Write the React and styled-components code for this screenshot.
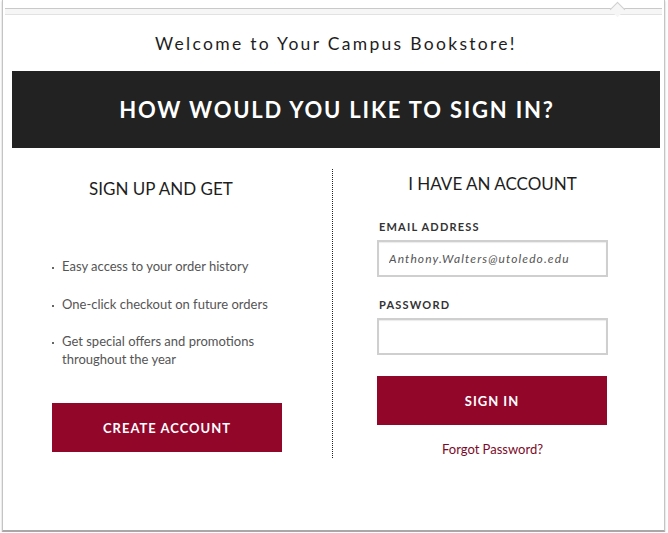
import React from 'react';
import styled, { createGlobalStyle } from 'styled-components';

const GlobalStyle = createGlobalStyle`
  html, body {
    margin: 0;
    padding: 0;
    background: #ffffff;
  }
  body {
    font-family: Lato, "Open Sans", Arial, sans-serif;
    color: #222;
  }
`;

const Frame = styled.div`
  position: relative;
  width: 661px;
  height: 522px;
  margin: 0 0 0 2px;
  border-left: 1px solid #c4c4c4;
  border-right: 1px solid #c4c4c4;
  border-bottom: 2px solid #a8a8a8;
  box-shadow: 0 1px 2px rgba(0, 0, 0, 0.25);
  background: #fff;
  padding-top: 8px;
`;

const TabStrip = styled.div`
  position: relative;
  height: 5px;
  border-top: 1px solid #c9c9c9;
  border-bottom: 1px solid #e2e2e2;
  background: #f6f6f6;
  margin: 0 2px;
`;

const Notch = styled.div`
  position: absolute;
  top: -5px;
  left: 607px;
  width: 10px;
  height: 10px;
  background: #f6f6f6;
  border-top: 1px solid #d0d0d0;
  border-left: 1px solid #d0d0d0;
  transform: rotate(45deg);
`;

const Welcome = styled.h2`
  margin: 18px 0 0;
  padding-left: 5px;
  text-align: center;
  font-size: 17.5px;
  font-weight: 400;
  letter-spacing: 2.3px;
  line-height: 22px;
  color: #1e1e1e;
`;

const Banner = styled.div`
  margin: 16px 4px 0 9px;
  padding-left: 2px;
  height: 77px;
  background: #222222;
  display: flex;
  align-items: center;
  justify-content: center;
  color: #fff;
  font-size: 22px;
  font-weight: 700;
  letter-spacing: 1.8px;
`;

const Columns = styled.div`
  display: grid;
  grid-template-columns: 320px 328px;
  margin: 21px 0 0 9px;
`;

const Column = styled.div`
  display: flex;
  flex-direction: column;
  padding: ${(p) => (p.$right ? '0 52px 0 44px' : '0 50px 6px 40px')};
  border-left: ${(p) => (p.$right ? '1px dotted #222' : 'none')};
`;

const Heading = styled.h3`
  margin: ${(p) => (p.$right ? '4px 0 0' : '9px 0 0')};
  text-align: center;
  font-size: 17px;
  font-weight: 400;
  line-height: 22px;
  color: #1e1e1e;
  transform: ${(p) => (p.$right ? 'none' : 'translateX(-6px)')};
`;

const Benefits = styled.ul`
  list-style: none;
  margin: 57px 0 0;
  padding: 0;
  display: flex;
  flex-direction: column;
  gap: 19.5px;
`;

const Benefit = styled.li`
  position: relative;
  padding-left: 10px;
  font-size: 13px;
  line-height: 18px;
  color: #555;
  &::before {
    content: '';
    position: absolute;
    left: 0;
    top: 10px;
    width: 2px;
    height: 2px;
    background: #666;
  }
`;

const PrimaryButton = styled.button`
  width: 230px;
  height: 49px;
  margin-top: ${(p) => p.$top || '0px'};
  border: none;
  background: #92062a;
  color: #fff;
  font-family: Lato, "Open Sans", Arial, sans-serif;
  font-size: 13px;
  font-weight: 700;
  letter-spacing: 1px;
  cursor: pointer;
`;

const Label = styled.label`
  display: block;
  margin: ${(p) => p.$top} 0 6px 2px;
  font-size: 11px;
  font-weight: 700;
  letter-spacing: 1.2px;
  line-height: 14px;
  color: #333;
`;

const Input = styled.input`
  box-sizing: border-box;
  width: 231px;
  height: 37px;
  padding: 0 10px;
  border: 2px solid #cfcfcf;
  box-shadow: inset 0 1px 1px rgba(0, 0, 0, 0.08);
  font-family: Lato, "Open Sans", Arial, sans-serif;
  font-size: 12px;
  font-style: italic;
  letter-spacing: 1.1px;
  color: #555;
  outline: none;
  &::placeholder {
    color: #555;
  }
`;

const Forgot = styled.a`
  margin-top: 16px;
  text-align: center;
  font-size: 13px;
  color: #7c0a27;
  text-decoration: none;
`;

const benefits = [
  'Easy access to your order history',
  'One-click checkout on future orders',
  'Get special offers and promotions throughout the year',
];

export default function App() {
  return (
    <>
      <GlobalStyle />
      <Frame>
        <TabStrip>
          <Notch />
        </TabStrip>
        <Welcome>Welcome to Your Campus Bookstore!</Welcome>
        <Banner>HOW WOULD YOU LIKE TO SIGN IN?</Banner>
        <Columns>
          <Column>
            <Heading>SIGN UP AND GET</Heading>
            <Benefits>
              {benefits.map((b) => (
                <Benefit key={b}>{b}</Benefit>
              ))}
            </Benefits>
            <PrimaryButton $top="35px">CREATE ACCOUNT</PrimaryButton>
          </Column>
          <Column $right>
            <Heading $right>I HAVE AN ACCOUNT</Heading>
            <Label $top="25px">EMAIL ADDRESS</Label>
            <Input type="email" placeholder="Anthony.Walters@utoledo.edu" />
            <Label $top="21px">PASSWORD</Label>
            <Input type="password" />
            <PrimaryButton $top="21px">SIGN IN</PrimaryButton>
            <Forgot href="#">Forgot Password?</Forgot>
          </Column>
        </Columns>
      </Frame>
    </>
  );
}
